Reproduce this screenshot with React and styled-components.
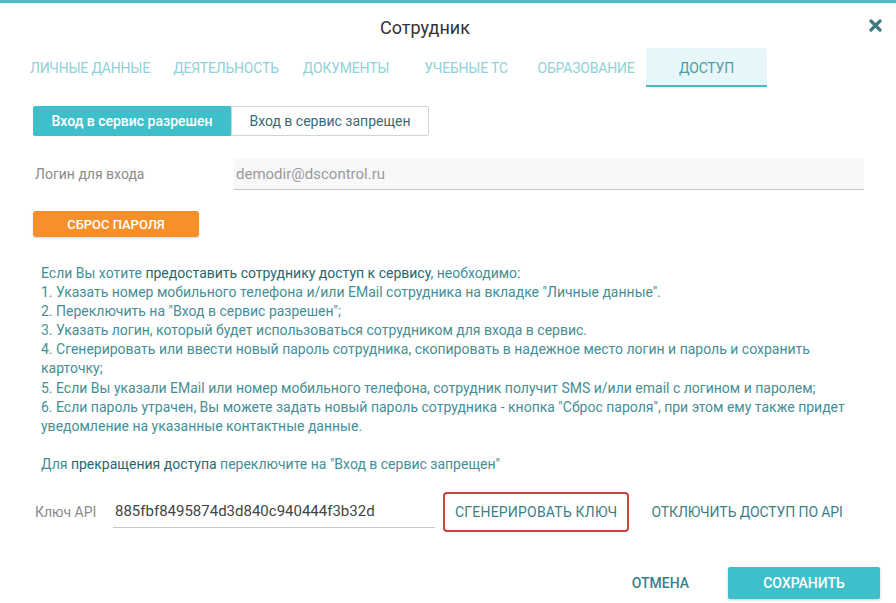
import React, { useState } from 'react';
import styled, { createGlobalStyle } from 'styled-components';

const GlobalStyle = createGlobalStyle`
  body {
    margin: 0;
    background: #fff;
    font-family: Roboto, "Noto Sans", Arial, sans-serif;
  }
`;

const Modal = styled.div`
  width: 896px;
  height: 603px;
  box-sizing: border-box;
  border-top: 3px solid #47bcc4;
  background: #fff;
  position: relative;
`;

const Header = styled.div`
  height: 45px;
  display: flex;
  align-items: center;
  justify-content: center;
  padding-right: 46px;
`;

const Title = styled.h1`
  margin: 4px 0 0;
  font-size: 18px;
  font-weight: 400;
  color: #333;
`;

const Close = styled.button`
  position: absolute;
  top: 16px;
  right: 14px;
  border: 0;
  background: none;
  padding: 0;
  cursor: pointer;
  display: flex;
`;

const Tabs = styled.div`
  display: flex;
  padding-left: 20px;
  height: 39px;
`;

const Tab = styled.div`
  width: ${(p) => p.$w || 120}px;
  padding-right: ${(p) => p.$pr || 0}px;
  display: flex;
  align-items: center;
  justify-content: center;
  font-size: 14px;
  text-transform: uppercase;
  letter-spacing: -0.2px;
  box-sizing: border-box;
  color: ${(p) => (p.$active ? '#4b9ea6' : '#8fd1d6')};
  background: ${(p) => (p.$active ? '#e7f6f9' : 'transparent')};
  border-bottom: 2px solid ${(p) => (p.$active ? '#47bcc4' : 'transparent')};
  padding-top: 2px;
  border-radius: 2px 2px 0 0;
  cursor: pointer;
`;

const Body = styled.div`
  padding: 19px 32px 0 33px;
`;

const Toggle = styled.div`
  display: flex;
`;

const ToggleButton = styled.button`
  width: 198px;
  height: 30px;
  font-family: inherit;
  font-size: 14px;
  font-weight: ${(p) => (p.$on ? 500 : 400)};
  border: 1px solid ${(p) => (p.$on ? '#3fbfca' : '#cfd4d6')};
  background: ${(p) => (p.$on ? '#3fbfca' : '#fff')};
  color: ${(p) => (p.$on ? '#fff' : '#3b6a72')};
  border-radius: ${(p) => (p.$left ? '2px 0 0 2px' : '0 2px 2px 0')};
  cursor: pointer;
`;

const FieldRow = styled.div`
  display: flex;
  align-items: center;
  margin-top: ${(p) => p.$mt}px;
`;

const Label = styled.div`
  width: ${(p) => p.$w}px;
  padding-left: 2px;
  font-size: 14px;
  color: #8a8a8a;
  flex-shrink: 0;
`;

const Input = styled.input`
  font-family: inherit;
  border: 0;
  border-bottom: 1px solid #c8c8c8;
  outline: none;
  box-sizing: border-box;
  padding: 0 2px;
  font-size: 15px;
  width: ${(p) => p.$w}px;
  height: 32px;
  background: ${(p) => (p.$muted ? '#f8f8f8' : '#fff')};
  color: ${(p) => (p.$muted ? '#9a9a9a' : '#444')};
`;

const ResetButton = styled.button`
  margin-top: 21px;
  width: 166px;
  height: 26px;
  background: #f7902b;
  color: #fff;
  border: 0;
  border-radius: 3px;
  font-family: inherit;
  font-size: 13px;
  font-weight: 500;
  text-transform: uppercase;
  box-shadow: 0 1px 2px rgba(0, 0, 0, 0.15);
  cursor: pointer;
`;

const Info = styled.div`
  margin: 27px 0 0 8px;
  width: 815px;
  font-size: 14px;
  line-height: 19.1px;
  color: #448f96;
`;

const Strong = styled.span`
  color: #28676e;
`;

const Gap = styled.div`
  height: 19px;
`;

const ApiRow = styled.div`
  display: flex;
  align-items: center;
  margin-top: 18px;
`;

const LinkButton = styled.button`
  height: 40px;
  padding: 0 ${(p) => (p.$framed ? 10 : 0)}px;
  margin-left: ${(p) => p.$ml}px;
  font-family: inherit;
  font-size: 14px;
  letter-spacing: ${(p) => (p.$framed ? 0.2 : -0.1)}px;
  text-transform: uppercase;
  color: #3b7f86;
  background: none;
  border: 2px solid ${(p) => (p.$framed ? '#c8453b' : 'transparent')};
  border-radius: 4px;
  cursor: pointer;
`;

const Footer = styled.div`
  display: flex;
  justify-content: flex-end;
  align-items: center;
  margin-top: 35px;
  padding-right: 16px;
`;

const Cancel = styled.button`
  font-family: inherit;
  font-size: 14px;
  font-weight: 500;
  text-transform: uppercase;
  color: #3b7f86;
  background: none;
  border: 0;
  padding: 0;
  margin-right: 39px;
  cursor: pointer;
`;

const Save = styled.button`
  width: 152px;
  height: 32px;
  font-family: inherit;
  font-size: 14px;
  font-weight: 500;
  text-transform: uppercase;
  color: #fff;
  background: #3fbfca;
  border: 0;
  border-radius: 2px;
  box-shadow: 0 1px 3px rgba(0, 0, 0, 0.2);
  cursor: pointer;
`;

const tabs = [
  { name: 'Личные данные', w: 146, pr: 6 },
  { name: 'Деятельность' },
  { name: 'Документы' },
  { name: 'Учебные ТС' },
  { name: 'Образование' },
  { name: 'Доступ', w: 121 },
];

const App = () => {
  const [allowed, setAllowed] = useState(true);

  return (
    <>
      <GlobalStyle />
      <Modal>
        <Header>
          <Title>Сотрудник</Title>
        </Header>
        <Close aria-label="Закрыть">
          <svg width="13" height="13" viewBox="0 0 13 13">
            <path d="M2 2 L11 11 M11 2 L2 11" stroke="#3b7b82" strokeWidth="3.2" strokeLinecap="round" />
          </svg>
        </Close>

        <Tabs>
          {tabs.map((t) => (
            <Tab key={t.name} $w={t.w} $pr={t.pr} $active={t.name === 'Доступ'}>
              {t.name}
            </Tab>
          ))}
        </Tabs>

        <Body>
          <Toggle>
            <ToggleButton $left $on={allowed} onClick={() => setAllowed(true)}>
              Вход в сервис разрешен
            </ToggleButton>
            <ToggleButton $on={!allowed} onClick={() => setAllowed(false)}>
              Вход в сервис запрещен
            </ToggleButton>
          </Toggle>

          <FieldRow $mt={22}>
            <Label $w={199}>Логин для входа</Label>
            <Input $muted $w={632} defaultValue="demodir@dscontrol.ru" />
          </FieldRow>

          <ResetButton>Сброс пароля</ResetButton>

          <Info>
            Если Вы хотите <Strong>предоставить сотруднику доступ к сервису</Strong>, необходимо:
            <br />
            1. Указать номер мобильного телефона и/или EMail сотрудника на вкладке "Личные данные".
            <br />
            2. Переключить на "Вход в сервис разрешен";
            <br />
            3. Указать логин, который будет использоваться сотрудником для входа в сервис.
            <br />
            4. Сгенерировать или ввести новый пароль сотрудника, скопировать в надежное место логин и пароль и сохранить карточку;
            <br />
            5. Если Вы указали EMail или номер мобильного телефона, сотрудник получит SMS и/или email с логином и паролем;
            <br />
            6. Если пароль утрачен, Вы можете задать новый пароль сотрудника - кнопка "Сброс пароля", при этом ему также придет уведомление на указанные контактные данные.
            <Gap />
            Для <Strong>прекращения доступа</Strong> переключите на "Вход в сервис запрещен"
          </Info>

          <ApiRow>
            <Label $w={78}>Ключ API</Label>
            <Input $w={322} defaultValue="885fbf8495874d3d840c940444f3b32d" />
            <LinkButton $framed $ml={8}>Сгенерировать ключ</LinkButton>
            <LinkButton $ml={20}>Отключить доступ по API</LinkButton>
          </ApiRow>
        </Body>

        <Footer>
          <Cancel>Отмена</Cancel>
          <Save>Сохранить</Save>
        </Footer>
      </Modal>
    </>
  );
};

export default App;
